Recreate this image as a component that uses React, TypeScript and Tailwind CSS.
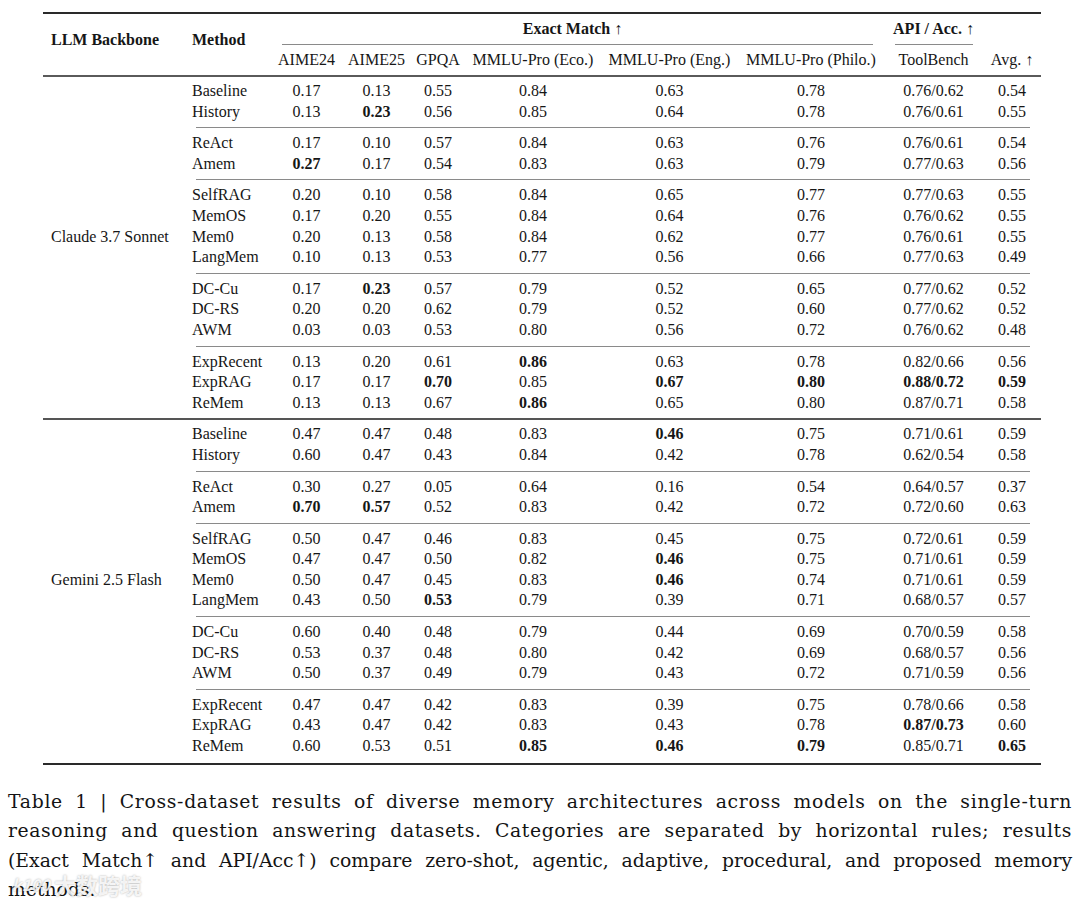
const COLS = "grid grid-cols-[142px_86px_71px_69px_54px_136px_137px_146px_99px_58px]";

type Row = { name: string; vals: string[]; label?: string };

const claude: Row[][] = [
  [
    { name: "Baseline", vals: ["0.17", "0.13", "0.55", "0.84", "0.63", "0.78", "0.76/0.62", "0.54"] },
    { name: "History", vals: ["0.13", "*0.23", "0.56", "0.85", "0.64", "0.78", "0.76/0.61", "0.55"] },
  ],
  [
    { name: "ReAct", vals: ["0.17", "0.10", "0.57", "0.84", "0.63", "0.76", "0.76/0.61", "0.54"] },
    { name: "Amem", vals: ["*0.27", "0.17", "0.54", "0.83", "0.63", "0.79", "0.77/0.63", "0.56"] },
  ],
  [
    { name: "SelfRAG", vals: ["0.20", "0.10", "0.58", "0.84", "0.65", "0.77", "0.77/0.63", "0.55"] },
    { name: "MemOS", vals: ["0.17", "0.20", "0.55", "0.84", "0.64", "0.76", "0.76/0.62", "0.55"] },
    { name: "Mem0", label: "Claude 3.7 Sonnet", vals: ["0.20", "0.13", "0.58", "0.84", "0.62", "0.77", "0.76/0.61", "0.55"] },
    { name: "LangMem", vals: ["0.10", "0.13", "0.53", "0.77", "0.56", "0.66", "0.77/0.63", "0.49"] },
  ],
  [
    { name: "DC-Cu", vals: ["0.17", "*0.23", "0.57", "0.79", "0.52", "0.65", "0.77/0.62", "0.52"] },
    { name: "DC-RS", vals: ["0.20", "0.20", "0.62", "0.79", "0.52", "0.60", "0.77/0.62", "0.52"] },
    { name: "AWM", vals: ["0.03", "0.03", "0.53", "0.80", "0.56", "0.72", "0.76/0.62", "0.48"] },
  ],
  [
    { name: "ExpRecent", vals: ["0.13", "0.20", "0.61", "*0.86", "0.63", "0.78", "0.82/0.66", "0.56"] },
    { name: "ExpRAG", vals: ["0.17", "0.17", "*0.70", "0.85", "*0.67", "*0.80", "*0.88/0.72", "*0.59"] },
    { name: "ReMem", vals: ["0.13", "0.13", "0.67", "*0.86", "0.65", "0.80", "0.87/0.71", "0.58"] },
  ],
];

const gemini: Row[][] = [
  [
    { name: "Baseline", vals: ["0.47", "0.47", "0.48", "0.83", "*0.46", "0.75", "0.71/0.61", "0.59"] },
    { name: "History", vals: ["0.60", "0.47", "0.43", "0.84", "0.42", "0.78", "0.62/0.54", "0.58"] },
  ],
  [
    { name: "ReAct", vals: ["0.30", "0.27", "0.05", "0.64", "0.16", "0.54", "0.64/0.57", "0.37"] },
    { name: "Amem", vals: ["*0.70", "*0.57", "0.52", "0.83", "0.42", "0.72", "0.72/0.60", "0.63"] },
  ],
  [
    { name: "SelfRAG", vals: ["0.50", "0.47", "0.46", "0.83", "0.45", "0.75", "0.72/0.61", "0.59"] },
    { name: "MemOS", vals: ["0.47", "0.47", "0.50", "0.82", "*0.46", "0.75", "0.71/0.61", "0.59"] },
    { name: "Mem0", label: "Gemini 2.5 Flash", vals: ["0.50", "0.47", "0.45", "0.83", "*0.46", "0.74", "0.71/0.61", "0.59"] },
    { name: "LangMem", vals: ["0.43", "0.50", "*0.53", "0.79", "0.39", "0.71", "0.68/0.57", "0.57"] },
  ],
  [
    { name: "DC-Cu", vals: ["0.60", "0.40", "0.48", "0.79", "0.44", "0.69", "0.70/0.59", "0.58"] },
    { name: "DC-RS", vals: ["0.53", "0.37", "0.48", "0.80", "0.42", "0.69", "0.68/0.57", "0.56"] },
    { name: "AWM", vals: ["0.50", "0.37", "0.49", "0.79", "0.43", "0.72", "0.71/0.59", "0.56"] },
  ],
  [
    { name: "ExpRecent", vals: ["0.47", "0.47", "0.42", "0.83", "0.39", "0.75", "0.78/0.66", "0.58"] },
    { name: "ExpRAG", vals: ["0.43", "0.47", "0.42", "0.83", "0.43", "0.78", "*0.87/0.73", "0.60"] },
    { name: "ReMem", vals: ["0.60", "0.53", "0.51", "*0.85", "*0.46", "*0.79", "0.85/0.71", "*0.65"] },
  ],
];

const DataRow = ({ row }: { row: Row }) => (
  <div className={`${COLS} h-[20.6px] leading-[20.6px]`}>
    <div className="pl-[8px] whitespace-nowrap">{row.label ?? ""}</div>
    <div className="pl-[7px]">{row.name}</div>
    {row.vals.map((v, i) => {
      const bold = v.startsWith("*");
      return (
        <div key={i} className={bold ? "text-center font-bold" : "text-center"}>
          {bold ? v.slice(1) : v}
        </div>
      );
    })}
  </div>
);

const GroupRule = () => (
  <div className="h-[11px] flex items-center">
    <div className="ml-[153px] mr-[11px] flex-1 h-px bg-[#8a8a8a]" />
  </div>
);

const Block = ({ groups }: { groups: Row[][] }) => (
  <div>
    {groups.map((g, gi) => (
      <div key={gi}>
        {gi > 0 && <GroupRule />}
        {g.map((r) => (
          <DataRow key={r.name} row={r} />
        ))}
      </div>
    ))}
  </div>
);

export default function App() {
  return (
    <div className="relative w-[1080px] h-[906px] bg-white text-[#161616] font-['Liberation_Serif',serif] overflow-hidden">
      <div className="ml-[43px] w-[998px] pt-[12px] text-[16px]">
        <div className="h-[2px] bg-[#2a2a2a]" />
        <div className={`${COLS} grid-rows-[30px_1px_30px]`}>
          <div className="row-span-3 flex items-center pl-[8px] pb-[9px] font-bold">LLM Backbone</div>
          <div className="row-span-3 flex items-center pl-[7px] pb-[9px] font-bold">Method</div>
          <div className="col-start-3 col-end-9 flex items-center justify-center pr-[10px] font-bold">Exact Match ↑</div>
          <div className="col-start-9 col-end-10 flex items-center justify-center font-bold whitespace-nowrap">API / Acc. ↑</div>
          <div className="col-start-10" />
          <div className="col-start-3 col-end-9 mx-[11px] bg-[#8a8a8a]" />
          <div className="col-start-9 col-end-10 ml-[11px] mr-[10px] bg-[#8a8a8a]" />
          <div className="col-start-10" />
          {["AIME24", "AIME25", "GPQA", "MMLU-Pro (Eco.)", "MMLU-Pro (Eng.)", "MMLU-Pro (Philo.)", "ToolBench", "Avg. ↑"].map((h, i) => (
            <div key={h} className={`flex items-center justify-center whitespace-nowrap ${i === 0 ? "col-start-3" : ""}`}>
              {h}
            </div>
          ))}
        </div>
        <div className="h-[2px] bg-[#5a5a5a]" />
        <div className="h-[4px]" />
        <Block groups={claude} />
        <div className="h-[11px] flex items-center">
          <div className="flex-1 h-[1.5px] bg-[#555]" />
        </div>
        <Block groups={gemini} />
        <div className="h-[6px]" />
        <div className="h-[2px] bg-[#2a2a2a]" />
      </div>

      <div className="mt-[22px] px-[8px] text-[18.8px] leading-[29.5px] text-[#141414] font-['DejaVu_Serif',serif]">
        <div className="whitespace-nowrap tracking-[0.7px] text-justify [text-align-last:justify]">
          Table 1 | Cross-dataset results of diverse memory architectures across models on the single-turn
        </div>
        <div className="whitespace-nowrap tracking-[0.6px] text-justify [text-align-last:justify]">
          reasoning and question answering datasets. Categories are separated by horizontal rules; results
        </div>
        <div className="whitespace-nowrap text-justify [text-align-last:justify]">
          (Exact Match↑ and API/Acc↑) compare zero-shot, agentic, adaptive, procedural, and proposed memory
        </div>
        <div>methods.</div>
      </div>

      <div className="absolute left-[12px] top-[873px] flex items-center gap-[4px] text-[22px] leading-none font-bold text-white/85 [text-shadow:0_0_2px_rgba(0,0,0,0.35)] font-['Noto_Sans_CJK_SC',sans-serif]">
        <span className="text-[16px] italic">k100</span>
        <span>大数跨境</span>
      </div>
    </div>
  );
}
